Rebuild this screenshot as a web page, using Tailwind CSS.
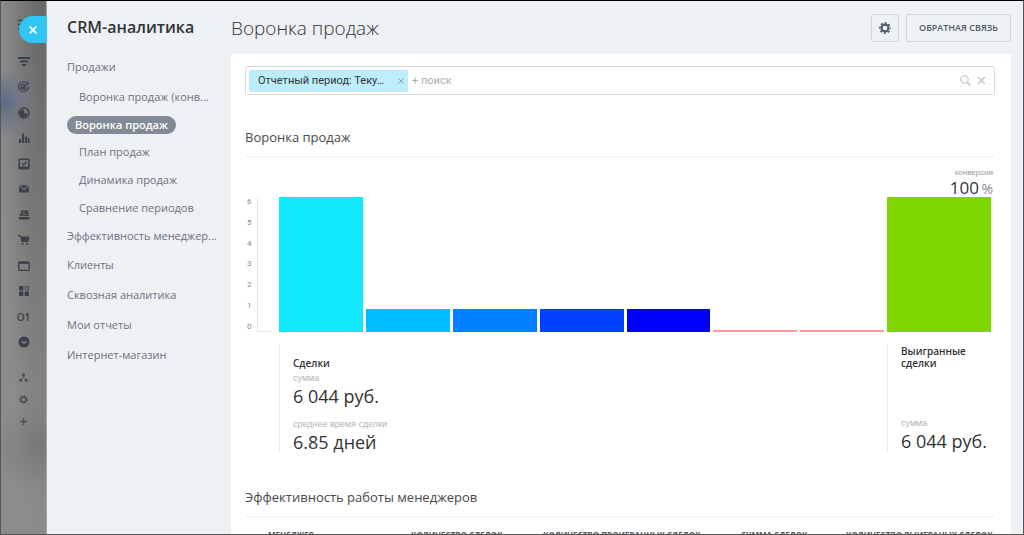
<!DOCTYPE html>
<html lang="ru">
<head>
<meta charset="utf-8">
<title>CRM-аналитика</title>
<script src="https://cdn.jsdelivr.net/npm/@tailwindcss/browser@4"></script>
</head>
<body class="h-screen overflow-hidden bg-[#edf1f4] font-['Open_Sans','Noto_Sans',sans-serif] text-[#333]">
<div class="relative flex h-full overflow-hidden border border-t-black border-x-[#555] border-b-[#555]">

  <!-- Icon rail -->
  <nav aria-label="Разделы" class="relative w-[46px] shrink-0 border-r border-[#a5a5a3] bg-[#8b8b89] bg-[radial-gradient(circle_at_4px_102px,#5a6a85_0,#6f7888_14px,transparent_34px),radial-gradient(ellipse_at_40px_0px,#686868_0,transparent_40px),radial-gradient(circle_at_36px_445px,#7c7c7a_0,transparent_44px)] pt-[48px] text-[#3a414b]">
    <svg class="absolute top-[18px] left-[17px] size-3" viewBox="0 0 12 12" fill="none" stroke="currentColor" stroke-width="1.3"><path d="M0 1.500h12M0 5.500h12M0 9.500h12"/></svg>
    <ul class="grid h-[306px] grid-rows-12 justify-items-center">
      <li class="flex items-center"><a href="#" aria-label="Лента"><svg class="size-3" viewBox="0 0 12 12" fill="currentColor"><path d="M0 1h12v2H0zM2 4.500h8v2H2zM4 8h4v2H4z"/></svg></a></li>
      <li class="flex items-center"><a href="#" aria-label="Задачи"><svg class="size-3" viewBox="0 0 12 12" fill="none" stroke="currentColor" stroke-width="1.200"><path d="M8.300 1.600A5 5 0 1 0 10.500 5M7.200 3.900A2.600 2.600 0 1 0 8.100 6M5.600 6.400 10 2M9.200.4v2.300h2.400"/><circle cx="5.600" cy="6.400" r=".8" fill="currentColor"/></svg></a></li>
      <li class="flex items-center"><a href="#" aria-label="CRM-аналитика" class="flex size-[22px] items-center justify-center rounded-full bg-[#757679]"><svg class="size-3" viewBox="0 0 12 12"><circle cx="6" cy="6" r="5" fill="none" stroke="currentColor" stroke-width="1.500"/><path d="M5.800 2.500V6.300H9.500A3.700 3.700 0 1 1 5.800 2.500z" fill="currentColor"/></svg></a></li>
      <li class="flex items-center"><a href="#" aria-label="Отчеты"><svg class="size-3" viewBox="0 0 12 12" fill="currentColor"><rect x="1" y="7" width="2" height="4" rx=".6"/><rect x="4" y="1.500" width="2.200" height="9.500" rx=".6"/><rect x="7.200" y="4.500" width="2" height="6.500" rx=".6"/><rect x="10" y="6" width="1.500" height="5" rx=".6"/></svg></a></li>
      <li class="flex items-center"><a href="#" aria-label="Дела"><svg class="size-3" viewBox="0 0 12 12" fill="none" stroke="currentColor" stroke-width="1.500"><rect x="1.200" y="1.200" width="9.600" height="9.600" rx=".6"/><path d="M3.600 5.200 5.500 7 8.600 3.800" stroke-width="1.300"/><path d="M1 9.500h10" stroke-width="2"/></svg></a></li>
      <li class="flex items-center"><a href="#" aria-label="Почта"><svg class="size-3" viewBox="0 0 12 12" fill="currentColor"><path d="M1.500 2.300h9L6 6z"/><path d="M1 3.200 6 7.300l5-4.100v6.300H1z"/></svg></a></li>
      <li class="flex items-center"><a href="#" aria-label="Касса"><svg class="size-3" viewBox="0 0 12 12" fill="currentColor"><path fill-rule="evenodd" d="M3 1.500h7l.8 5.500H1.800V5h1zM4.500 3v1H7V3zM4.300 5.200v.7h4.900v-.7z"/><path d="M.8 8h10.600v2.500H.8z"/></svg></a></li>
      <li class="flex items-center"><a href="#" aria-label="Магазин"><svg class="size-3" viewBox="0 0 12 12" fill="currentColor"><path d="M0 1h2.500l.5 1.500h8.600L10.300 8H3.500L2 2.200H0z"/><circle cx="4.500" cy="10" r="1.100"/><circle cx="9" cy="10" r="1.100"/></svg></a></li>
      <li class="flex items-center"><a href="#" aria-label="Сайты"><svg class="size-3" viewBox="0 0 12 12" fill="none" stroke="currentColor"><rect x=".8" y="1.800" width="10.400" height="8.600" rx="1" stroke-width="1.300"/><path d="M1 3h10" stroke-width="1.800"/></svg></a></li>
      <li class="flex items-center"><a href="#" aria-label="Приложения"><svg class="size-3" viewBox="0 0 12 12" fill="currentColor"><rect x="1" y="1" width="4.400" height="4.400" rx=".6"/><rect x="1" y="6.600" width="4.400" height="4.400" rx=".6"/><rect x="6.600" y="6.600" width="4.400" height="4.400" rx=".6"/><rect x="7.100" y="1.500" width="3.400" height="3.400" rx=".6" fill="none" stroke="currentColor"/></svg></a></li>
      <li class="flex items-center"><a href="#" class="text-[10px] leading-none font-semibold">О1</a></li>
      <li class="flex items-center"><a href="#" aria-label="Еще"><svg class="size-3" viewBox="0 0 12 12"><circle cx="6" cy="6" r="5.500" fill="currentColor"/><path d="M3.700 5.200 6 7.300l2.300-2.100" fill="none" stroke="#8b8b89" stroke-width="1.200"/></svg></a></li>
    </ul>
    <ul class="mt-3 grid h-[65px] grid-rows-3 justify-items-center text-[#4b4f57]">
      <li class="flex items-center"><a href="#" aria-label="Карта сайта"><svg class="size-[9px]" viewBox="0 0 10 10" fill="currentColor"><path d="M5 2v3M5 4 2.500 7.500M5 4l2.500 3.500" stroke="currentColor" stroke-width=".8"/><circle cx="5" cy="2" r="1.700"/><circle cx="2" cy="8" r="1.700"/><circle cx="8" cy="8" r="1.700"/></svg></a></li>
      <li class="flex items-center"><a href="#" aria-label="Настройки"><svg class="size-[9px]" viewBox="0 0 12 12" fill="none" stroke="currentColor"><circle cx="6" cy="6" r="3.400" stroke-width="2"/><circle cx="6" cy="6" r="5" stroke-width="1.800" stroke-dasharray="2 1.927"/></svg></a></li>
      <li class="flex items-center"><a href="#" aria-label="Добавить"><svg class="size-[9px]" viewBox="0 0 10 10" stroke="currentColor" stroke-width="1.600"><path d="M5 1v8M1 5h8"/></svg></a></li>
    </ul>
    <button type="button" aria-label="Закрыть" class="absolute top-[15px] -right-px flex h-[27px] w-7 items-center justify-center rounded-l-full bg-[#2fc6f6]"><svg class="size-2" viewBox="0 0 8 8" stroke="#fff" stroke-width="1.700"><path d="M.7.7l6.600 6.600M7.300.7.7 7.300"/></svg></button>
  </nav>

  <!-- Analytics sections -->
  <aside class="w-[184px] shrink-0 pl-5">
    <h2 class="flex h-[51px] items-center text-[16px] font-semibold">CRM-аналитика</h2>
    <ul class="text-[11px] text-[#6a737f]">
      <li class="flex h-[30px] items-center"><a href="#">Продажи</a></li>
      <li class="flex h-[30px] items-center pl-3"><a href="#">Воронка продаж (конв...</a></li>
      <li class="flex h-[26px] items-center"><a href="#" aria-current="page" class="flex h-[18px] items-center rounded-full bg-[#828b95] px-2 font-semibold text-white">Воронка продаж</a></li>
      <li class="flex h-7 items-center pl-3"><a href="#">План продаж</a></li>
      <li class="flex h-7 items-center pl-3"><a href="#">Динамика продаж</a></li>
      <li class="flex h-7 items-center pl-3"><a href="#">Сравнение периодов</a></li>
      <li class="flex h-7 items-center"><a href="#">Эффективность менеджер...</a></li>
      <li class="flex h-[30px] items-center"><a href="#">Клиенты</a></li>
      <li class="flex h-[30px] items-center"><a href="#">Сквозная аналитика</a></li>
      <li class="flex h-[30px] items-center"><a href="#">Мои отчеты</a></li>
      <li class="flex h-[30px] items-center"><a href="#">Интернет-магазин</a></li>
    </ul>
  </aside>

  <main class="flex min-w-0 flex-1 flex-col pr-3">
    <header class="flex h-[53px] shrink-0 items-center gap-[7px]">
      <h1 class="flex-1 text-[19px] leading-[24px] font-light">Воронка продаж</h1>
      <button type="button" aria-label="Настройки" class="flex size-7 items-center justify-center rounded-xs border border-[#d2d7dc] text-[#525c69]"><svg class="size-3" viewBox="0 0 12 12" fill="none" stroke="currentColor"><circle cx="6" cy="6" r="3.400" stroke-width="2.100"/><circle cx="6" cy="6" r="5.100" stroke-width="1.700" stroke-dasharray="2 2.006" stroke-dashoffset="1"/></svg></button>
      <button type="button" class="h-7 rounded-xs border border-[#d2d7dc] px-3 text-[9px] font-semibold text-[#525c69]">ОБРАТНАЯ СВЯЗЬ</button>
    </header>

    <div class="flex-1 bg-white px-3.5 pt-3">
      <div class="mr-0.5 flex h-[29px] items-center rounded-xs border border-[#d5dce1] pr-2 pl-[3px] font-['Roboto',sans-serif] text-[11px]">
        <div class="flex h-[22px] w-[159px] items-center justify-between rounded-xs bg-[#bcedfc] pr-1 pl-[9px]">
          <span class="pt-0.5">Отчетный период: Теку…</span>
          <button type="button" aria-label="Убрать фильтр"><svg class="size-[6px]" viewBox="0 0 6 6" stroke="#7fa5b3"><path d="M.5.500l5 5M5.500.500l-5 5"/></svg></button>
        </div>
        <input type="text" aria-label="Поиск" placeholder="+ поиск" class="min-w-0 flex-1 px-1 pt-0.5 outline-none placeholder:text-[#a8adb4]">
        <button type="button" aria-label="Найти"><svg class="size-[11px]" viewBox="0 0 11 11" fill="none" stroke="#bfc3c8" stroke-width="1.100"><circle cx="4.500" cy="4.500" r="3.700"/><path d="M7.200 7.200l3.200 3.200" stroke-width="1.500"/></svg></button>
        <button type="button" aria-label="Очистить" class="ml-1.5"><svg class="size-[9px]" viewBox="0 0 9 9" stroke="#bfc3c8" stroke-width="1.300"><path d="M1 1l7 7M8 1 1 8"/></svg></button>
      </div>

      <section class="mr-0.5">
        <h2 class="mt-[31px] flex h-[31px] items-center border-b border-[#f0f1f2] pb-[7px] text-[13px] text-[#484848]">Воронка продаж</h2>
        <div class="mt-[11px] flex h-[29px] flex-col items-end pr-0.5">
          <span class="font-['Liberation_Sans',sans-serif] text-[8px] leading-[10px] text-[#9a9a9a]">конверсия</span>
          <span class="text-[17px] leading-[19px]">100 <span class="-ml-0.5 text-[14px] text-[#828b95]">%</span></span>
        </div>
        <!-- Funnel bars -->
        <div class="flex h-[135px] pr-1">
          <div class="flex w-3 flex-col justify-between py-px pl-0.5 font-['Roboto',sans-serif] text-[8px] leading-[8px] text-[#85898e]">
            <span>6</span><span>5</span><span>4</span><span>3</span><span>2</span><span>1</span><span>0</span>
          </div>
          <div class="mr-2 w-3.5 border-b border-l border-[#e5e6e8]"></div>
          <div class="grid flex-1 grid-cols-[repeat(7,84fr)_104fr] items-end gap-[3px]">
            <div class="bg-[#11e7ff]" style="height:135px"></div>
            <div class="bg-[#00bfff]" style="height:23px"></div>
            <div class="bg-[#0080ff]" style="height:23px"></div>
            <div class="bg-[#0040ff]" style="height:23px"></div>
            <div class="bg-[#0000ff]" style="height:23px"></div>
            <div class="bg-[#ff9a9a]" style="height:2px"></div>
            <div class="bg-[#ff9a9a]" style="height:2px"></div>
            <div class="bg-[#7dd600]" style="height:135px"></div>
          </div>
        </div>
        <div class="mt-[13px] flex h-[108px] justify-between pr-px pl-[34px]">
          <div class="flex flex-col border-l border-[#ececee] pt-[11px] pl-[13px]">
            <h3 class="text-[10px] leading-[14px] font-semibold">Сделки</h3>
            <span class="mt-0.5 font-['Liberation_Sans',sans-serif] text-[9px] leading-[13px] text-[#b0b3b8]">сумма</span>
            <span class="text-[18px] leading-[22px]">6 044 руб.</span>
            <span class="mt-[11px] font-['Liberation_Sans',sans-serif] text-[9px] leading-[13px] text-[#b0b3b8]">среднее время сделки</span>
            <span class="text-[18px] leading-[22px]">6.85 дней</span>
          </div>
          <div class="flex w-[107px] flex-col border-l border-[#ececee] pb-px pl-[13px] whitespace-nowrap">
            <h3 class="text-[10px] leading-[12px] font-semibold">Выигранные<br>сделки</h3>
            <span class="mt-auto font-['Liberation_Sans',sans-serif] text-[9px] leading-[13px] text-[#b0b3b8]">сумма</span>
            <span class="text-[18px] leading-[22px]">6 044 руб.</span>
          </div>
        </div>
      </section>

      <section>
        <h2 class="mt-[33px] mr-0.5 flex h-[31px] items-center border-b border-[#f0f1f2] pb-[7px] text-[13px] text-[#484848]">Эффективность работы менеджеров</h2>
        <table class="mt-[10px] w-full table-fixed text-left whitespace-nowrap text-[#525c69]">
          <colgroup><col class="w-[166px]"><col class="w-[132px]"><col class="w-[198px]"><col class="w-[105px]"><col></colgroup>
          <thead class="text-[8px] leading-[16px]">
            <tr>
              <th class="pl-[23px] font-bold">МЕНЕДЖЕР</th>
              <th class="font-bold">КОЛИЧЕСТВО СДЕЛОК</th>
              <th class="font-bold">КОЛИЧЕСТВО ПРОИГРАННЫХ СДЕЛОК</th>
              <th class="font-bold">СУММА СДЕЛОК</th>
              <th class="font-bold">КОЛИЧЕСТВО ВЫИГРАНЫХ СДЕЛОК</th>
            </tr>
          </thead>
        </table>
      </section>
    </div>
  </main>
</div>
</body>
</html>
